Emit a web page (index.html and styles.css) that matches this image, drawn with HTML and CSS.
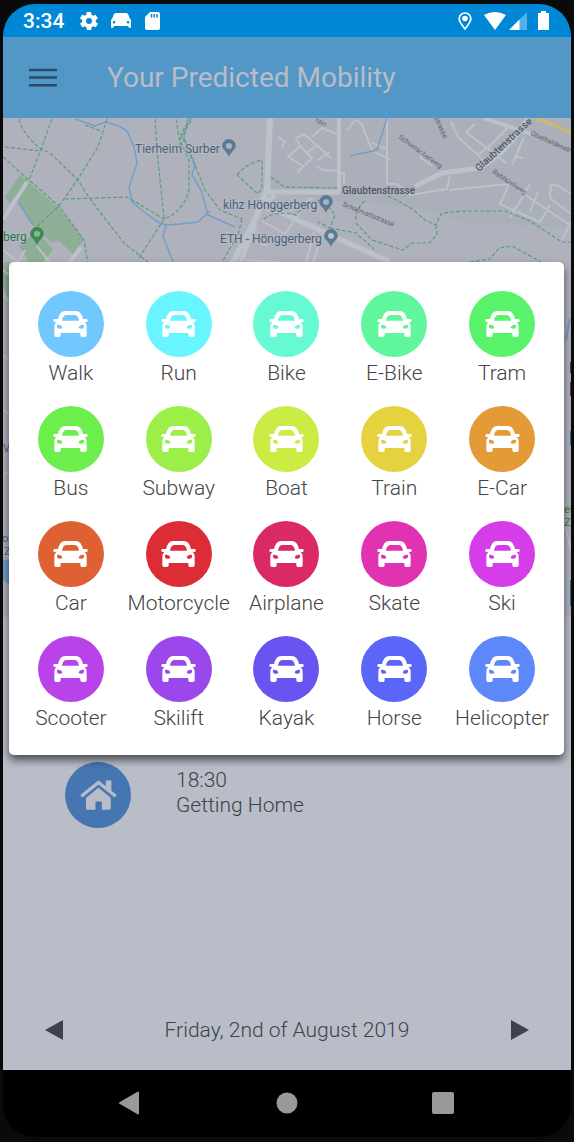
FILE: index.html
```html
<!DOCTYPE html>
<html lang="en">
<head>
<meta charset="utf-8">
<meta name="viewport" content="width=device-width, initial-scale=1">
<title>Your Predicted Mobility</title>
<link rel="stylesheet" href="styles.css">
</head>
<body>
<svg class="defs" aria-hidden="true">
  <symbol id="car" viewBox="0 0 105 78">
    <path fill="currentColor" fill-rule="evenodd" d="M37 0H68Q77 0 82 6Q88 14 90 24H102Q106 28 102 33H95Q101 38 101 46V73Q101 78 96 78H87Q82 78 82 73V66H23V73Q23 78 18 78H9Q4 78 4 73V46Q4 38 10 33H3Q-1 28 3 24H15Q17 14 23 6Q28 0 37 0ZM40 12Q34 12 31 17Q28 22 27 29H78Q77 22 74 17Q71 12 65 12ZM13 41Q9 52 18 53Q26 54 28 50Q26 40 13 41ZM92 41Q96 52 87 53Q79 54 77 50Q79 40 92 41Z"/>
  </symbol>
  <symbol id="pin" viewBox="0 0 14 18">
    <path fill="currentColor" fill-rule="evenodd" d="M7 0A6.8 6.8 0 0 1 13.8 6.8C13.800 11 9 12 7 18C5 12 .2 11 .2 6.800A6.800 6.800 0 0 1 7 0ZM7 4A3 3 0 1 0 7 10A3 3 0 1 0 7 4Z"/>
  </symbol>
</svg>
<div class="phone">
  <header class="status">
    <div class="status-group">
      <span class="clock">3:34</span>
      <svg class="s-gear" viewBox="2 2 20 20"><path fill="#fff" d="M19.400 13c.1-.3.1-.6.1-1s0-.7-.1-1l2.100-1.600c.2-.1.300-.4.100-.6l-2-3.500c-.1-.2-.4-.3-.6-.2l-2.500 1c-.5-.4-1.100-.7-1.700-1l-.4-2.600c0-.3-.2-.5-.5-.5h-4c-.3 0-.5.2-.5.400L9 5.100c-.6.2-1.200.6-1.700 1l-2.500-1c-.2-.1-.5 0-.6.200l-2 3.500c-.1.200-.1.500.1.600L4.500 11c0 .3-.1.700-.1 1s0 .7.100 1l-2.100 1.600c-.2.1-.3.400-.1.600l2 3.500c.1.200.4.300.6.200l2.500-1c.5.400 1.100.7 1.700 1l.4 2.600c0 .3.200.5.500.5h4c.3 0 .5-.2.500-.4l.4-2.700c.6-.2 1.200-.6 1.700-1l2.500 1c.2.1.5 0 .6-.2l2-3.500c.1-.2.1-.5-.1-.6zM12 15.300a3.300 3.300 0 1 1 0-6.600 3.300 3.300 0 0 1 0 6.600z"/></svg>
      <svg class="s-car" viewBox="0 0 20 15"><path fill="#fff" fill-rule="evenodd" d="M5 0H15Q17 0 17.500 2L18.500 5Q20 6 20 8V14Q20 15 19 15Q17.500 15 17 13H3Q2.500 15 1 15Q0 15 0 14V8Q0 6 1.500 5L2.500 2Q3 0 5 0ZM3 8a1.300 1.300 0 1 0 .1 2.600A1.300 1.300 0 0 0 3 8ZM17 8a1.300 1.300 0 1 0 .1 2.600A1.300 1.300 0 0 0 17 8Z"/></svg>
      <svg class="s-sd" viewBox="0 0 15 18"><path fill="#fff" d="M5 0H13Q15 0 15 2V16Q15 18 13 18H2Q0 18 0 16V5Z"/><path stroke="#0087d6" stroke-width="1.500" d="M6.500 2V5.500M9.200 2V5.500M12 2V5.500"/></svg>
    </div>
    <div class="status-group">
      <svg class="s-loc" viewBox="0 0 14 18"><path fill="none" stroke="#fff" stroke-width="1.700" d="M7 1A5.800 5.800 0 0 1 12.800 6.800C12.800 10.500 9 14 7 17C5 14 1.200 10.500 1.200 6.800A5.800 5.800 0 0 1 7 1Z"/><circle cx="7" cy="6.500" r="2.800" fill="#fff"/></svg>
      <svg class="s-wifi" viewBox="0 0 22 18"><path fill="#fff" d="M0 3Q11-3 22 3L11 18Z"/></svg>
      <svg class="s-cell" viewBox="0 0 18 18"><path fill="#55b0e6" d="M18 0V18H0Z"/><path fill="#fff" d="M10.500 7.500V18H0Z"/></svg>
      <svg class="s-batt" viewBox="0 0 11 19"><path fill="#fff" d="M3 0H8V2H11V19H0V2H3Z"/></svg>
    </div>
  </header>

  <div class="screen">
    <div class="appbar">
      <button class="icon-btn menu" aria-label="Menu"><svg viewBox="0 0 28 20"><path stroke="#2b4c66" stroke-width="2.500" d="M0 2H28M0 9.500H28M0 17.300H28"/></svg></button>
      <h1 class="title">Your Predicted Mobility</h1>
    </div>

    <svg class="map" viewBox="3 118 568 499" preserveAspectRatio="xMidYMid slice" role="img" aria-label="Map">
      <rect x="3" y="118" width="568" height="499" fill="#afb2bc"/>
      <path fill="#abafba" d="M270 118H571V230C500 220 470 232 440 214C400 200 350 210 270 188Z"/>
      <g fill="#8fae98">
        <path d="M20 175L28 180L10 203L5 197Z"/>
        <path d="M28 182L58 207L84 240L73 254L58 240L52 243L47 238L34 228L17 200Z"/>
        <path d="M19 246L37 231L53 250L42 263H30Z"/>
        <path d="M3 212L8 216L3 224ZM3 262H9V300L3 286Z"/>
      </g>
      <g fill="none" stroke="#bdc1ca">
        <path stroke-width="6" d="M270 118L267 190L255 220L232 264"/>
        <path stroke-width="5" d="M267 192H340M267 192Q252 208 280 212L390 262M415 186L442 173L480 168Q510 150 528 118M255 213L275 195"/>
        <path stroke-width="4" d="M27 182L3 220M81 247L69 263M339 118V191M484 118L531 134M240 263L256 225"/>
        <path stroke-width="2" d="M312 198L290 211M262 221L285 234L300 212M245 260L280 262M314 232L306 263M322 234L313 263M250 240L268 246M338 173H344V184M278 137L285 142L282 147M287 158L300 146L296 138L304 134L331 158M290 158L303 166L297 173M300 146L312 158L305 165M308 152L316 146M316 166L323 170L340 171M312 137L322 128L340 135M318 160L330 152M348 130L355 120L361 123L372 150L390 160M387 118V184H397L410 195L447 189L450 175M388 150L372 143M430 157L420 150L421 158L432 166M450 190L509 184L571 226M509 184L500 204L540 222L550 205M451 122L458 137L478 155L490 145M466 132L506 163M488 148L510 125M475 124L466 132M478 155L486 165M512 165L524 137M516 157L523 158M530 184L510 218M538 192L530 212M562 240L571 222M550 190V198L571 214M552 191Q548 182 558 186L571 194M25 250L18 263M37 246L50 263M3 250L20 264"/>
        <path stroke-width="2" d="M3 270L10 276M3 295L10 302M3 355L10 360M3 410L10 414M3 475L10 471M3 550L10 560M565 525L571 550"/>
      </g>
      <path fill="none" stroke="#c8b683" stroke-width="4" d="M535 118Q555 124 571 134"/>
      <path fill="none" stroke="#739ec8" stroke-width="1.500" d="M75 119L95 126L105 122L119 126L127 131L134 147L137 163L129 187L132 202L144 212L158 222L166 225L180 224L198 222L210 211M166 225L163 236L173 262M18 202L33 225M188 118L184 138L195 165L192 175L201 190L208 215L235 227M387 118L377 150L350 156"/>
      <g fill="none" stroke="#5a9e76" stroke-width="1.200" stroke-dasharray="4 2">
        <path d="M19 119Q23 135 41 149L50 153L78 180L90 199L103 216L125 244L148 262M52 119L41 149L29 180M5 147L41 151M3 157L29 180L59 206L84 240L88 263M107 119L98 147L78 179L59 206L33 230M85 125L101 131M65 199L127 197L164 219M155 119L157 150L164 219Q184 211 189 190V160L180 140L192 119M164 219L139 258M176 119L181 150M191 118L181 134L197 170L205 190L220 210L242 219"/>
        <path d="M237 175Q247 163 262 160V188L258 194L237 175M271 177L284 187L338 188M242 219L238 235L222 262M264 219Q275 210 296 215L306 204L328 198M328 206L335 215L330 228L318 222M330 228L356 233L374 249M356 220Q355 208 366 200M388 196L400 202L412 209L425 220L436 225L441 214Q450 211 475 211H505L530 221L562 242H571M436 225L437 235L429 243L412 243L403 250L372 240L356 223M470 262L490 259L499 248L512 246L541 262"/>
      </g>
      <g class="road">
        <text x="342" y="194" font-weight="500">Glaubtenstrasse</text>
        <text class="small" transform="translate(398 138) rotate(36)">Schumacherweg</text>
        <text class="small" transform="translate(342 206) rotate(22)">Schafmattstrasse</text>
        <text font-weight="500" transform="translate(479 172) rotate(-43)">Glaubtenstrasse</text>
        <text class="small" transform="translate(492 173) rotate(34)">Rebhüsliweg</text>
        <text class="small" transform="translate(530 135) rotate(24)">Obsthaldenstr</text>
        <text class="small" transform="translate(434 118) rotate(65)">strasse</text>
        <text class="small" transform="translate(315 121) rotate(32)">rain</text>
      </g>
      <g class="place">
        <text x="135" y="153">Tierheim Surber</text>
        <text x="223" y="209">kihz Hönggerberg</text>
        <text x="220" y="243">ETH - Hönggerberg</text>
        <text class="park" x="3" y="241">berg</text>
      </g>
      <g color="#587b96">
        <use href="#pin" x="222" y="139" width="14" height="18"/>
        <use href="#pin" x="319" y="195" width="14" height="18"/>
        <use href="#pin" x="324" y="229" width="14" height="18"/>
      </g>
      <use href="#pin" x="30" y="227" width="14" height="18" color="#398b50"/>
      <g class="edge">
        <text x="3" y="452">V</text><text x="2" y="542">on</text><text x="4" y="555">Z</text>
        <text class="green" x="564" y="513">ei</text><text class="green" x="564" y="526">Z</text>
      </g>
      <path fill="#709dc5" d="M3 560H10V585L3 580Z"/>
      <path stroke="#739ec8" stroke-width="2" d="M566 340L570 318"/>
      <path stroke="#782f40" stroke-width="2" d="M571 362V373M571 382V396"/>
      <path stroke="#2c72a2" stroke-width="2" d="M571 431V445M571 580V606"/>
    </svg>

    <main class="timeline">
      <div class="event">
        <span class="badge"><svg viewBox="0 0 112 90"><path fill="#b9bdc7" d="M55 21L93 51V84Q93 90 87 90H66V65H47V90H24Q18 90 18 84V51Z"/><path fill="none" stroke="#4576b2" stroke-width="20" d="M4 52L56 10L108 52"/><path fill="none" stroke="#b9bdc7" stroke-width="10" d="M4 49L56 7L108 49"/><path fill="#b9bdc7" d="M78 1H95V34L78 20Z"/></svg></span>
        <p class="event-text">18:30<br>Getting Home</p>
      </div>
    </main>

    <nav class="datebar" aria-label="Day">
      <button class="icon-btn arrow" aria-label="Previous day"><svg viewBox="0 0 18 20"><path fill="#3d414c" d="M18 0V20L0 10Z"/></svg></button>
      <span class="date">Friday, 2nd of August 2019</span>
      <button class="icon-btn arrow" aria-label="Next day"><svg viewBox="0 0 18 20"><path fill="#3d414c" d="M0 0V20L18 10Z"/></svg></button>
    </nav>

    <div class="dialog" role="dialog" aria-label="Transport mode">
      <button class="mode walk"><span class="disc"><svg><use href="#car"/></svg></span>Walk</button>
      <button class="mode run"><span class="disc"><svg><use href="#car"/></svg></span>Run</button>
      <button class="mode bike"><span class="disc"><svg><use href="#car"/></svg></span>Bike</button>
      <button class="mode ebike"><span class="disc"><svg><use href="#car"/></svg></span>E-Bike</button>
      <button class="mode tram"><span class="disc"><svg><use href="#car"/></svg></span>Tram</button>
      <button class="mode bus"><span class="disc"><svg><use href="#car"/></svg></span>Bus</button>
      <button class="mode subway"><span class="disc"><svg><use href="#car"/></svg></span>Subway</button>
      <button class="mode boat"><span class="disc"><svg><use href="#car"/></svg></span>Boat</button>
      <button class="mode train"><span class="disc"><svg><use href="#car"/></svg></span>Train</button>
      <button class="mode ecar"><span class="disc"><svg><use href="#car"/></svg></span>E-Car</button>
      <button class="mode auto"><span class="disc"><svg><use href="#car"/></svg></span>Car</button>
      <button class="mode motorcycle"><span class="disc"><svg><use href="#car"/></svg></span>Motorcycle</button>
      <button class="mode airplane"><span class="disc"><svg><use href="#car"/></svg></span>Airplane</button>
      <button class="mode skate"><span class="disc"><svg><use href="#car"/></svg></span>Skate</button>
      <button class="mode ski"><span class="disc"><svg><use href="#car"/></svg></span>Ski</button>
      <button class="mode scooter"><span class="disc"><svg><use href="#car"/></svg></span>Scooter</button>
      <button class="mode skilift"><span class="disc"><svg><use href="#car"/></svg></span>Skilift</button>
      <button class="mode kayak"><span class="disc"><svg><use href="#car"/></svg></span>Kayak</button>
      <button class="mode horse"><span class="disc"><svg><use href="#car"/></svg></span>Horse</button>
      <button class="mode helicopter"><span class="disc"><svg><use href="#car"/></svg></span>Helicopter</button>
    </div>
  </div>

  <nav class="sysnav" aria-label="System">
    <button class="icon-btn" aria-label="Back"><svg viewBox="0 0 24 24"><path fill="#999" stroke="#999" stroke-width="2" stroke-linejoin="round" d="M19 1.500V22.500L1 12Z"/></svg></button>
    <button class="icon-btn" aria-label="Home"><svg viewBox="0 0 24 24"><circle cx="12" cy="12" r="10.500" fill="#999"/></svg></button>
    <button class="icon-btn" aria-label="Recents"><svg viewBox="0 0 24 24"><rect x="1" y="1" width="22" height="22" rx="2" fill="#999"/></svg></button>
  </nav>
</div>
</body>
</html>
```
FILE: styles.css
```css
* { box-sizing: border-box; }
body {
  margin: 0;
  background: #0a0a0a;
  font-family: Roboto, "Liberation Sans", sans-serif;
}
.defs { position: absolute; width: 0; height: 0; }
.phone {
  display: flex;
  flex-direction: column;
  min-height: 100vh;
  padding: 4px 3px 5px;
}
.icon-btn {
  display: flex;
  padding: 0;
  border: 0;
  background: none;
}
.status {
  display: flex;
  justify-content: space-between;
  align-items: center;
  height: 33px;
  padding: 0 22px 0 20px;
  background: #0087d6;
  border-radius: 32px 32px 0 0;
}
.status-group { display: flex; align-items: center; }
.clock { color: #fff; font-size: 21px; font-weight: 500; line-height: 24px; }
.s-gear { width: 18px; height: 18px; margin-left: 16px; }
.s-car { width: 20px; height: 15px; margin-left: 13px; }
.s-sd { width: 15px; height: 18px; margin-left: 14px; }
.s-loc { width: 14px; height: 18px; margin-right: 12px; }
.s-wifi { width: 22px; height: 18px; margin-right: 3px; }
.s-cell { width: 18px; height: 18px; margin-right: 11px; }
.s-batt { width: 11px; height: 19px; }

.screen {
  position: relative;
  display: flex;
  flex-direction: column;
  flex: 1;
  background: #b8bdc7;
}
.appbar {
  display: flex;
  align-items: center;
  gap: 50px;
  height: 81px;
  padding: 0 26px;
  background: #5397c6;
}
.menu svg { width: 28px; height: 20px; }
.title {
  margin: 0;
  color: #b9bcc6;
  font-size: 28px;
  font-weight: 400;
  line-height: 32px;
}
.map { display: block; width: 100%; height: 499px; }
.road text { font-size: 10px; fill: #4e5664; }
.road .small { font-size: 7px; fill: #5a6270; }
.place text { font-size: 12px; fill: #4a6077; stroke: #b5b9c3; stroke-width: 2px; paint-order: stroke; }
.place .park { fill: #287446; }
.edge text { font-size: 11px; fill: #46639a; }
.edge .green { fill: #3e7d52; }

.timeline { flex: 1; padding: 145px 62px 0; }
.event { display: flex; align-items: flex-start; gap: 45px; }
.badge, .disc {
  display: flex;
  align-items: center;
  justify-content: center;
  width: 66px;
  height: 66px;
  border-radius: 50%;
}
.badge { background: #4576b2; }
.badge svg { width: 37px; height: 30px; }
.event-text {
  margin: 0;
  padding-top: 6px;
  color: #3e424c;
  font-size: 21px;
  font-weight: 300;
  line-height: 25px;
}
.datebar {
  display: flex;
  align-items: center;
  justify-content: space-between;
  height: 80px;
  padding: 0 42px;
}
.arrow svg { width: 18px; height: 20px; }
.date { color: #3e424c; font-size: 21px; font-weight: 300; line-height: 25px; }

.dialog {
  position: absolute;
  top: 225px;
  left: 6px;
  right: 7px;
  display: grid;
  grid-template-columns: repeat(5, 1fr);
  row-gap: 20px;
  padding: 29px 8px 24px;
  background: #fff;
  border-radius: 5px;
  box-shadow: 0 5px 8px rgba(0, 0, 0, .6);
}
.mode {
  display: flex;
  flex-direction: column;
  align-items: center;
  gap: 4px;
  min-width: 0;
  padding: 0;
  border: 0;
  background: none;
  color: #444;
  font-family: inherit;
  font-size: 21px;
  font-weight: 300;
  line-height: 25px;
}
.disc { color: #fff; }
.disc svg { width: 35px; height: 26px; }
.walk .disc { background: #70c8ff; }
.run .disc { background: #69f5ff; }
.bike .disc { background: #65fad3; }
.ebike .disc { background: #60f69d; }
.tram .disc { background: #58f36b; }
.bus .disc { background: #6cef4c; }
.subway .disc { background: #9cef48; }
.boat .disc { background: #caec44; }
.train .disc { background: #e6d23f; }
.ecar .disc { background: #e39a37; }
.auto .disc { background: #de6033; }
.motorcycle .disc { background: #dc2d36; }
.airplane .disc { background: #da2966; }
.skate .disc { background: #e032b1; }
.ski .disc { background: #d53de8; }
.scooter .disc { background: #b843e9; }
.skilift .disc { background: #9a48ec; }
.kayak .disc { background: #6854f1; }
.horse .disc { background: #5b65f7; }
.helicopter .disc { background: #5c88f9; }

.sysnav {
  display: flex;
  align-items: center;
  justify-content: center;
  gap: 132px;
  height: 67px;
  padding-bottom: 2px;
  background: #000;
  border-radius: 0 0 32px 32px;
}
.sysnav svg { width: 24px; height: 24px; }
```
